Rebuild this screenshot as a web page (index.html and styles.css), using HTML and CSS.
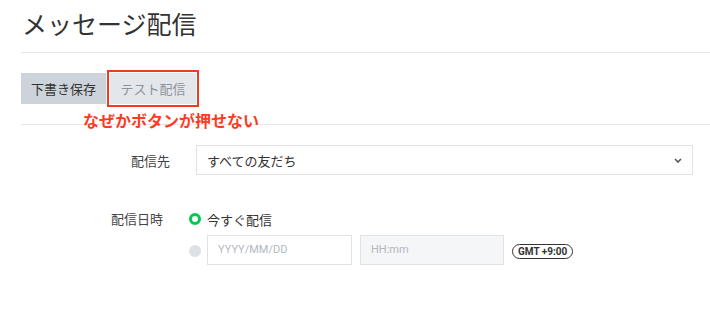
FILE: index.html
```html
<!DOCTYPE html>
<html lang="ja">
<head>
<meta charset="utf-8">
<link rel="stylesheet" href="styles.css">
</head>
<body>
<div class="page">
  <h1 class="title">メッセージ配信</h1>
  <div class="toolbar">
    <button class="btn btn-draft">下書き保存</button>
    <button class="btn btn-test">テスト配信</button>
    <span class="note">なぜかボタンが押せない</span>
  </div>
  <div class="form">
    <div class="row row-target">
      <div class="label label-target">配信先</div>
      <div class="select">
        <span>すべての友だち</span>
        <svg class="chev" width="8" height="5" viewBox="0 0 8 5"><path d="M1 1 L4 4 L7 1" fill="none" stroke="#555" stroke-width="1.6"/></svg>
      </div>
    </div>
    <div class="row row-date">
      <div class="label label-date">配信日時</div>
      <div class="options">
        <div class="opt opt-now">
          <span class="radio radio-on"></span>
          <span class="opt-text">今すぐ配信</span>
        </div>
        <div class="opt opt-later">
          <span class="radio radio-off"></span>
          <div class="input input-date">YYYY/MM/DD</div>
          <div class="input input-time">HH:mm</div>
          <span class="gmt">GMT +9:00</span>
        </div>
      </div>
    </div>
  </div>
</div>
</body>
</html>
```
FILE: styles.css
```css
* { box-sizing: border-box; }
html, body { margin: 0; padding: 0; background: #fff; }
body {
  font-family: "Roboto", "Noto Sans CJK JP", sans-serif;
  color: #333;
  width: 710px;
  height: 333px;
  overflow: hidden;
}
.page { padding-left: 21px; }
.title {
  margin: 0;
  padding: 6px 0 0 1px;
  height: 53px;
  font-size: 25px;
  line-height: 34px;
  font-weight: 400;
  color: #333;
  font-family: "Noto Sans CJK JP", sans-serif;
  border-bottom: 1px solid #e8e8e8;
}
.toolbar {
  position: relative;
  display: flex;
  gap: 4px;
  padding: 20px 0 20px;
  border-bottom: 1px solid #e8e8e8;
}
.btn {
  flex: none;
  height: 31px;
  padding: 0;
  border: none;
  border-radius: 0;
  font-family: "Noto Sans CJK JP", sans-serif;
  font-size: 13px;
  line-height: 31px;
  margin: 0;
  text-align: center;
}
.btn-draft { width: 85px; background: #cdd3da; color: #333; }
.btn-test {
  width: 86px;
  background: #e3e7eb;
  color: #8d939b;
  outline: 2px solid #f4391f;
  outline-offset: 1px;
}
.note {
  position: absolute;
  left: 62px;
  top: 57px;
  font-family: "Noto Sans CJK JP", sans-serif;
  font-size: 16px;
  font-weight: 700;
  color: #fb3b26;
  line-height: 20px;
  white-space: nowrap;
}
.form { padding-top: 20px; }
.row { display: flex; gap: 26px; }
.label {
  font-family: "Noto Sans CJK JP", sans-serif;
  font-size: 13px;
  color: #444;
  text-align: right;
}
.row-target { align-items: center; }
.label-target { width: 149px; }
.select {
  width: 497px;
  height: 30px;
  border: 1px solid #dfe2e6;
  display: flex;
  align-items: center;
  justify-content: space-between;
  padding: 0 10px 0 10px;
  font-family: "Noto Sans CJK JP", sans-serif;
  font-size: 13px;
  color: #333;
}
.chev { margin-top: 1px; }
.row-date { margin-top: 34px; }
.label-date { width: 142px; line-height: 20px; }
.options { display: flex; flex-direction: column; gap: 6px; }
.opt { display: flex; align-items: center; gap: 6px; }
.opt-now { height: 20px; }
.opt-text {
  font-family: "Noto Sans CJK JP", sans-serif;
  font-size: 13px;
  color: #333;
}
.radio {
  width: 12px;
  height: 12px;
  border-radius: 50%;
  flex: none;
}
.radio-on { border: 3px solid #06c755; background: #fff; }
.radio-off { background: #dde0e5; margin-top: 2px; }
.input {
  flex: none;
  height: 30px;
  width: 145px;
  border: 1px solid #dfe2e6;
  padding-left: 10px;
  font-size: 11px;
  line-height: 28px;
  color: #b3b8bf;
}
.input-date { background: #fff; }
.input-time { background: #f4f6f8; width: 144px; margin-left: 2px; }
.gmt {
  flex: none;
  white-space: nowrap;
  margin-left: 2px;
  margin-top: 2px;
  border: 1px solid #333;
  border-radius: 8px;
  height: 15px;
  padding: 0 5px;
  font-size: 10px;
  font-weight: 700;
  line-height: 13px;
  color: #333;
}
```
